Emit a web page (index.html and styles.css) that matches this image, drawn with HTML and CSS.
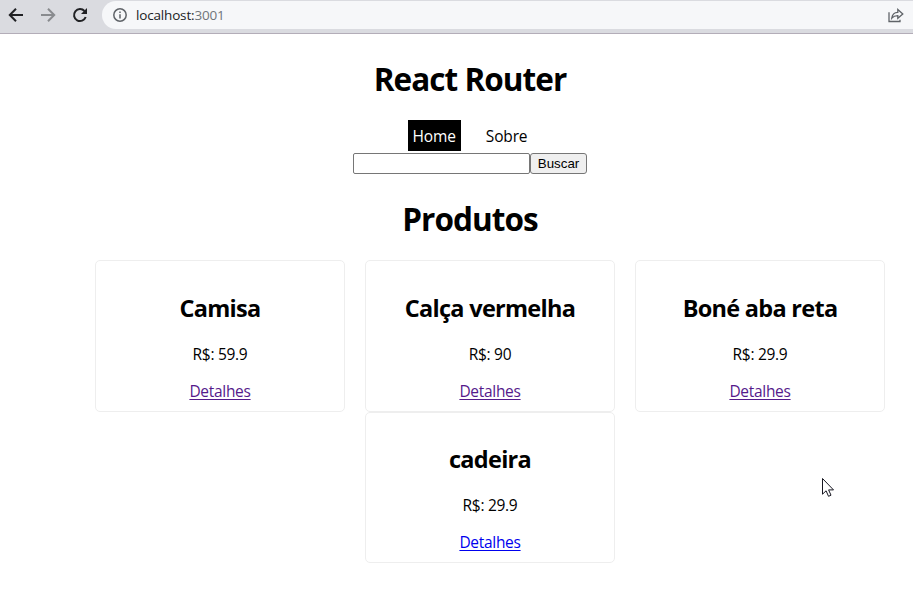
FILE: index.html
```html
<!DOCTYPE html>
<html lang="pt-BR">
<head>
<meta charset="utf-8">
<title>React Router</title>
<link rel="stylesheet" href="styles.css">
</head>
<body>
<header class="toolbar">
  <svg class="nav-icon" viewBox="0 0 16 16"><path d="M15 8H2M8 1.8L1.8 8L8 14.2"/></svg>
  <svg class="nav-icon disabled" viewBox="0 0 16 16"><path d="M1 8H14M8 1.8L14.2 8L8 14.2"/></svg>
  <svg class="nav-icon" viewBox="0 0 16 16"><path d="M13.7 10A6 6 0 1 1 12.5 4"/><path class="solid" d="M15 1V7H9Z"/></svg>
  <div class="address">
    <svg class="info" viewBox="0 0 14 14"><circle cx="7" cy="7" r="6.2"/><path d="M7 6.2V10.5M7 3.5V5"/></svg>
    <span class="url">localhost:<span class="port">3001</span></span>
    <svg class="share" viewBox="0 0 16 15"><path d="M1 4.3V13.5H12V11.8M3.8 10.2C4.2 6.8 6 4.5 9.8 4.4V1.5L14.8 6L9.8 10.3V7.6C7.2 7.6 5.3 8.4 3.8 10.2Z"/></svg>
  </div>
</header>
<main class="app">
  <h1>React Router</h1>
  <nav class="menu">
    <a class="active" href="#home">Home</a>
    <a href="#sobre">Sobre</a>
  </nav>
  <form class="search"><input type="text"><button type="button">Buscar</button></form>
  <h1>Produtos</h1>
  <ul class="products">
    <li><h2>Camisa</h2><p>R$: 59.9</p><a class="visited" href="#p1">Detalhes</a></li>
    <li><h2>Calça vermelha</h2><p>R$: 90</p><a class="visited" href="#p2">Detalhes</a></li>
    <li><h2>Boné aba reta</h2><p>R$: 29.9</p><a class="visited" href="#p3">Detalhes</a></li>
    <li><h2>cadeira</h2><p>R$: 29.9</p><a href="#p4">Detalhes</a></li>
  </ul>
</main>
<svg class="cursor" viewBox="0 0 12 19"><path d="M.5 .5V16.2L4.1 12.8L6.5 18.3L9 17.2L6.6 11.9H11.5Z"/></svg>
</body>
</html>
```
FILE: styles.css
```css
* { box-sizing: border-box; }
body {
  margin: 0;
  height: 611px;
  overflow: hidden;
  background: #fff;
  color: #000;
  font: 400 15.5px/21px "Open Sans", "Noto Sans", sans-serif;
}
.toolbar {
  display: flex;
  align-items: center;
  gap: 16px;
  height: 34px;
  padding: 0 0 4px 8px;
  background: #dadbe0;
  border-bottom: 1px solid #b3adb8;
}
.nav-icon {
  width: 16px;
  height: 16px;
  flex: none;
  fill: none;
  stroke: #202124;
  stroke-width: 2;
}
.nav-icon.disabled { stroke: #898b8f; }
.nav-icon .solid { fill: #202124; stroke: none; }
.address {
  display: flex;
  align-items: center;
  flex: 1;
  height: 28px;
  margin-left: -2px;
  padding: 0 9px 0 11px;
  background: #f6f7f9;
  border-radius: 14px 0 0 14px;
}
.info { width: 14px; height: 14px; fill: none; stroke: #5f6368; stroke-width: 1.5; }
.url { margin: 2px 0 0 9px; font-size: 13.5px; letter-spacing: -.17px; color: #202124; }
.port { color: #70757a; }
.share { width: 16px; height: 15px; margin: 2px 0 0 auto; fill: none; stroke: #5f6368; stroke-width: 1.3; }
.app { padding: 23px 0 0 27px; text-align: center; }
h1 { margin: 0; font-size: 31.5px; line-height: 43px; font-weight: 700; letter-spacing: -.95px; }
.menu { display: flex; justify-content: center; gap: 20px; margin-top: 20px; }
.menu a { height: 31px; padding: 5px; line-height: 23px; letter-spacing: -.15px; color: #000; text-decoration: none; }
.menu .active { background: #000; color: #fff; }
.search { display: flex; justify-content: center; height: 21px; margin: 2px 0 23px; }
.search input { width: 177px; height: 21px; margin: 0; padding: 1px 2px; border: 1px solid #767676; border-radius: 2px; }
.search button {
  width: 57px;
  height: 21px;
  padding: 0;
  border: 1px solid #767676;
  border-radius: 3px;
  background: #efefef;
  color: #000;
  font: 13.33px "Liberation Sans", sans-serif;
}
.products {
  display: flex;
  flex-wrap: wrap;
  justify-content: center;
  column-gap: 20px;
  margin: 20px 0 0;
  padding: 0 0 0 40px;
  list-style: none;
}
.products li {
  width: 250px;
  height: 151px;
  padding: 30px 10px 0;
  border: 1px solid #eee;
  border-radius: 5px;
}
.products li:nth-child(-n+3) { height: 152px; padding-top: 31px; }
h2 { margin: 0; font-size: 23.5px; line-height: 32px; font-weight: 700; letter-spacing: -.72px; }
.products p { margin: 20px 0 16px; line-height: 21px; letter-spacing: -.3px; }
.products a { color: #00e; letter-spacing: -.3px; text-decoration-thickness: 1px; text-underline-offset: 2px; }
.products .visited { color: #551a8b; }
.cursor { position: absolute; left: 822px; top: 478px; width: 12px; height: 19px; fill: #fff; stroke: #171721; }
```
